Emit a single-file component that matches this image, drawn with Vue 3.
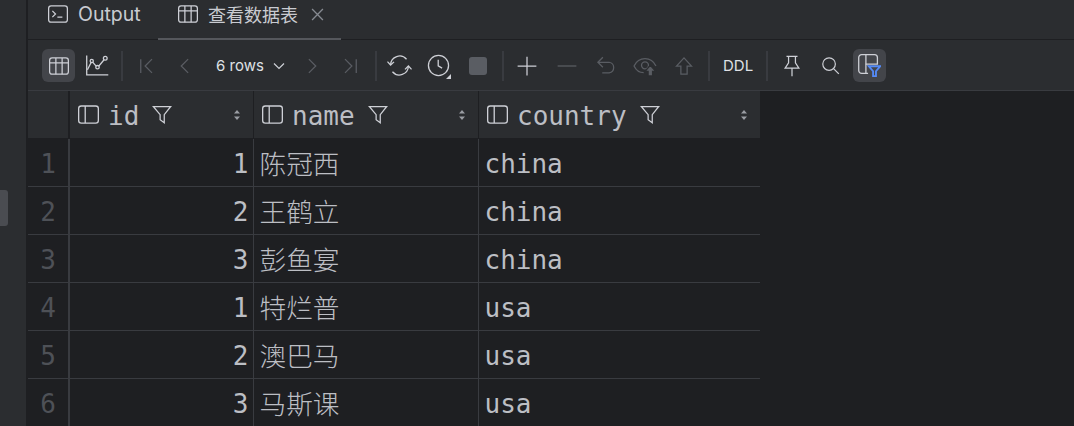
<script setup>
const rows = [
  { n: 1, id: 1, name: '陈冠西', country: 'china' },
  { n: 2, id: 2, name: '王鹤立', country: 'china' },
  { n: 3, id: 3, name: '彭鱼宴', country: 'china' },
  { n: 4, id: 1, name: '特烂普', country: 'usa' },
  { n: 5, id: 2, name: '澳巴马', country: 'usa' },
  { n: 6, id: 3, name: '马斯课', country: 'usa' },
]
const cols = ['id', 'name', 'country']
</script>

<template>
  <div class="page">
    <div class="thumb"></div>
    <aside class="strip"></aside>
    <main class="main">
      <div class="tabs">
        <div class="tab output">
          <svg class="ic" viewBox="0 0 16 16"><rect x="0.5" y="1.5" width="15" height="13" rx="2"/><path d="M3.5 5.5 6 8 3.5 10.5M7.5 10.5h4"/></svg>
          <span class="otext">Output</span>
        </div>
        <div class="tab active">
          <svg class="ic" viewBox="0 0 16 16"><rect x="0.5" y="1.5" width="15" height="13" rx="2"/><path d="M0.5 5.5h15M5.5 1.5v13M10.5 1.5v13"/></svg>
          <span>查看数据表</span>
          <svg class="close" viewBox="0 0 12 12"><path d="M1 1l10 10M11 1 1 11"/></svg>
        </div>
      </div>

      <div class="toolbar">
        <button class="btn on"><svg class="ic" viewBox="0 0 16 16"><rect x="0.5" y="1.5" width="15" height="13" rx="2"/><path d="M0.5 5.5h15M5.5 1.5v13M10.5 1.5v13"/></svg></button>
        <button class="btn"><svg class="ic big" viewBox="0 0 16 16"><path d="M.5 1v13.5h15"/><path d="M1 11l3-6 4 4.5 5-6"/><circle cx="4" cy="4.8" r="1.1" class="fill"/><circle cx="8" cy="9.2" r="1.2" class="fill"/><circle cx="13.4" cy="3" r="1.3" class="fill"/></svg></button>
        <i class="sep s1"></i>
        <button class="btn dim"><svg class="ic" viewBox="0 0 16 16"><path d="M3 2.5v11M12 2.5 6.5 8l5.5 5.5"/></svg></button>
        <button class="btn dim prev"><svg class="ic" viewBox="0 0 16 16"><path d="M10.5 2.5 5 8l5.5 5.5"/></svg></button>
        <div class="rows-sel"><span>6 rows</span><svg class="chev" viewBox="0 0 14 14"><path d="M2 4.5l5 5 5-5"/></svg></div>
        <button class="btn dim next"><svg class="ic" viewBox="0 0 16 16"><path d="M5.5 2.5 11 8l-5.500 5.500"/></svg></button>
        <button class="btn dim"><svg class="ic" viewBox="0 0 16 16"><path d="M13 2.500v11M4 2.500 9.500 8 4 13.500"/></svg></button>
        <i class="sep s2"></i>
        <button class="btn"><svg class="ic huge" viewBox="0 0 16 16"><path d="M2.300 7.500A5.800 5.800 0 0 1 12.500 4M13.700 8.500A5.800 5.800 0 0 1 3.500 12"/><path d="M.3 5.500l2 2.200 2.200-2M11.500 10.500l2.200-2.200 2 2.200"/></svg></button>
        <button class="btn clock"><svg class="ic big" viewBox="0 0 16 16"><circle cx="8" cy="8" r="7"/><path d="M7.800 4v4.200l2.700 1.600"/></svg><b class="corner"></b></button>
        <button class="btn"><span class="stop"></span></button>
        <i class="sep s3"></i>
        <button class="btn plus"><svg class="ic" viewBox="0 0 16 16"><path d="M8 .5v15M.5 8h15"/></svg></button>
        <button class="btn dim"><svg class="ic" viewBox="0 0 16 16"><path d="M.5 8h15"/></svg></button>
        <button class="btn dim"><svg class="ic" viewBox="0 0 16 16"><path d="M5.500 1 1.500 5l4 4M1.800 5H10.500a4.300 4.300 0 0 1 0 8.500H5"/></svg></button>
        <button class="btn dim"><svg class="ic wide" viewBox="0 0 18 16"><path d="M8 13C4.500 13 2 10.500.8 8 2 5.500 4.500 2.500 9 2.500s7 3 8.200 5.500"/><circle cx="9" cy="7.500" r="2.600"/><path class="solid" d="M13 7.500l4 4.500h-2.300v3.500h-3.400V12H9z"/></svg></button>
        <button class="btn dim"><svg class="ic" viewBox="0 0 16 16"><path d="M8 1.500 14 8h-3.500v6.500h-5V8H2z"/></svg></button>
        <i class="sep s4"></i>
        <span class="ddl">DDL</span>
        <i class="sep s5"></i>
        <button class="btn"><svg class="ic pin" viewBox="0 0 16 16"><path d="M4 1h8M5.500 1.500v4.200L3 9.500h10l-2.500-3.800V1.500M8 9.500v6"/></svg></button>
        <button class="btn"><svg class="ic search" viewBox="0 0 16 16"><circle cx="6.800" cy="6.800" r="5.300"/><path d="M10.800 10.800 15 15"/></svg></button>
        <button class="btn on"><svg class="ic big" viewBox="0 0 16 16"><path d="M7 13.500H2.500a2 2 0 0 1-2-2v-9a2 2 0 0 1 2-2h9a2 2 0 0 1 2 2v4.500H5M5.500 .5v13"/><path class="blue" d="M7.500 8.500h8L12.500 12v3.500h-2V12z"/></svg></button>
      </div>

      <div class="grid">
        <div class="row head">
          <div class="cell num"></div>
          <div v-for="c in cols" :key="c" class="cell hcell">
            <svg class="ic colic" viewBox="0 0 16 16"><rect x="0.500" y="1.500" width="15" height="13" rx="2"/><path d="M5.500 1.500v13"/></svg>
            <span class="hname">{{ c }}</span>
            <svg class="ic funnel" viewBox="0 0 16 16"><path d="M1 2h14L9.800 8.500v6.500l-3.300-2.500V8.500z"/></svg>
            <svg class="sort" viewBox="0 0 8 12"><path d="M4 1l3 3.600H1zM4 11 1 7.400h6z"/></svg>
          </div>
        </div>
        <div v-for="r in rows" :key="r.n" class="row">
          <div class="cell num">{{ r.n }}</div>
          <div class="cell idc">{{ r.id }}</div>
          <div class="cell namec">{{ r.name }}</div>
          <div class="cell">{{ r.country }}</div>
        </div>
      </div>
    </main>
  </div>
</template>

<style>
html, body { margin: 0; background: #1e1f22; overflow: hidden; }
</style>

<style scoped>
.page {
  position: relative;
  display: flex;
  width: 1074px;
  height: 426px;
  overflow: hidden;
  background: #1e1f22;
  font-family: Inter, "Noto Sans CJK SC", sans-serif;
}
.thumb {
  position: absolute;
  left: 0;
  top: 190px;
  width: 8px;
  height: 36px;
  background: #4a4c51;
  border-radius: 0 3px 3px 0;
}
.strip {
  width: 26px;
  flex: none;
  background: #2b2d30;
  border-right: 2px solid #1e1f22;
}
.main { flex: 1; min-width: 0; display: flex; flex-direction: column; }
.ic {
  width: 20px;
  height: 20px;
  flex: none;
  fill: none;
  stroke: #ced0d6;
  stroke-width: 1;
}
.ic .fill { fill: #2b2d30; }
.ic.big { width: 23px; height: 23px; stroke-width: 0.900; }
.ic.huge { width: 25px; height: 25px; stroke-width: 0.800; }
.ic.search { width: 19px; height: 19px; }
.ic.pin { width: 22px; height: 22px; stroke-width: 0.900; }
.tabs {
  height: 39px;
  flex: none;
  display: flex;
  background: #2b2d30;
  border-bottom: 1px solid #1e1f22;
  box-sizing: content-box;
}
.tab {
  display: flex;
  align-items: center;
  height: 39px;
  box-sizing: border-box;
  padding-bottom: 11px;
  color: #c9cbd1;
  font-size: 18px;
}
.otext { font-size: 19.500px; }
.tab .ic { margin-right: 10px; }
.output { width: 130px; padding-left: 20px; }
.active {
  width: 183px;
  padding-left: 20px;
  position: relative;
}
.active::after {
  content: '';
  position: absolute;
  left: 0;
  right: 0;
  bottom: -1px;
  height: 2px;
  background: #55575c;
}
.close {
  width: 13px;
  height: 13px;
  margin-left: 13px;
  fill: none;
  stroke: #868a91;
  stroke-width: 1.200;
}
.toolbar {
  flex: none;
  display: flex;
  align-items: center;
  padding: 1px 0 0 11px;
  box-sizing: border-box;
  height: 51px;
  background: #2b2d30;
  border-bottom: 1px solid #393b40;
}
.btn {
  position: relative;
  width: 33px;
  height: 33px;
  margin: 0 3px;
  padding: 0;
  flex: none;
  display: flex;
  align-items: center;
  justify-content: center;
  border: 0;
  border-radius: 6px;
  background: transparent;
}
.btn.prev { margin-left: 2px; }
.btn.next { margin-right: 2px; }
.btn.plus { margin-right: 4px; }
.on { background: #43454a; }
.dim .ic { stroke: #5a5d63; }
.dim .wide { width: 24px; height: 22px; }
.solid { fill: #5a5d63; stroke: #2b2d30; }
.blue { fill: #2b2d30; stroke: #548af7; stroke-width: 1.300; }
.btn.on .blue { fill: #43454a; }
.sep {
  width: 2px;
  height: 30px;
  flex: none;
  background: #393b40;
}
.s1 { margin: 0 4px; }
.s2 { margin: 0 3px 0 6px; }
.s3 { margin: 0 3px 0 5px; }
.s4 { margin: 0 13px 0 5px; }
.s5 { margin: 0 4px 0 13px; }
.rows-sel {
  display: flex;
  align-items: center;
  width: 88px;
  padding-left: 12px;
  box-sizing: border-box;
  flex: none;
  color: #dfe1e5;
  font-size: 15px;
}
.chev {
  width: 14px;
  height: 14px;
  margin-left: 8px;
  fill: none;
  stroke: #ced0d6;
  stroke-width: 1.200;
}
.corner {
  position: absolute;
  right: 4px;
  bottom: 3px;
  width: 0;
  height: 0;
  border-left: 5px solid transparent;
  border-bottom: 5px solid #ced0d6;
}
.stop {
  width: 18px;
  height: 18px;
  border-radius: 3px;
  background: #5a5d63;
}
.ddl { color: #dfe1e5; font-size: 15px; width: 30px; flex: none; }
.grid {
  font-family: "DejaVu Sans Mono", "Noto Sans CJK SC", monospace;
  font-size: 26px;
  color: #bcbec4;
}
.row {
  display: grid;
  grid-template-columns: 42px 184px 225px 281px;
  width: 732px;
  height: 48px;
  box-sizing: border-box;
  border-bottom: 1px solid #393b40;
}
.row.head {
  background: #2b2d30;
  border-bottom: 1px solid #1e1f22;
}
.cell {
  display: flex;
  align-items: center;
  padding: 2px 5.500px 0;
  min-width: 0;
  box-sizing: border-box;
  border-right: 1px solid #393b40;
  white-space: nowrap;
  overflow: hidden;
}
.row.head .cell { border-right-color: #1e1f22; }
.row.head .cell:last-child { border-right: 0; }
.row:not(.head) .cell:last-child { border-right: 0; }
.num {
  justify-content: center;
  color: #4e5157;
  border-right-width: 2px;
}
.idc { justify-content: flex-end; padding-right: 4.500px; }
.namec { font-family: "Noto Sans CJK SC", sans-serif; font-weight: 300; font-size: 26.700px; padding-top: 0; }
.hcell { padding: 0 12px 0 8px; }
.colic { width: 21px; height: 21px; margin-top: -1px; }
.hname { margin-left: 9px; padding-top: 3px; }
.funnel { margin-left: 13px; margin-top: -1px; }
.sort {
  width: 8px;
  height: 12px;
  margin-left: auto;
  fill: #9a9da3;
}
</style>
